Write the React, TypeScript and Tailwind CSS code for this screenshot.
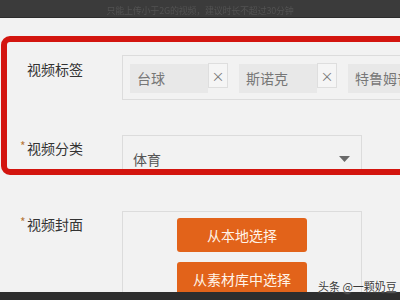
import { ReactNode } from 'react';

const font = { fontFamily: '"Noto Sans CJK SC", "Microsoft YaHei", sans-serif' };

function Label({ children, required }: { children: ReactNode; required?: boolean }) {
  return (
    <div className="flex items-start text-[14px] leading-[20px] text-[#333]">
      <span className="w-[7px] text-[12px] leading-[16px] text-[#b8783a]">{required ? '*' : ''}</span>
      <span>{children}</span>
    </div>
  );
}

function Tag({ text }: { text: string }) {
  return (
    <div className="flex items-start shrink-0">
      <div className="w-[78px] h-[29px] bg-[#e8e8e8] pl-[7px] text-[14px] leading-[29px] text-[#777] whitespace-nowrap overflow-hidden">
        {text}
      </div>
      <div className="w-[20px] h-[25px] -mt-[1px] bg-[#f5f5f5] border border-[#dedede] flex items-center justify-center text-[13px] text-[#777]">
        ×
      </div>
    </div>
  );
}

export default function App() {
  return (
    <div className="relative w-[400px] h-[300px] overflow-hidden bg-[#f2f2f2] flex flex-col" style={font}>
      <div className="h-[18px] shrink-0 bg-[#3b3b3b] border-b border-[#2c2c2c] flex items-center justify-center pt-[4px]">
        <span className="text-[9px] text-[#525252] blur-[0.6px] tracking-tight">
          只能上传小于2G的视频，建议时长不超过30分钟
        </span>
      </div>

      <div className="flex-1 overflow-hidden pt-[18px]">
        <div className="ml-[1px] w-[420px] h-[139px] border-[6px] border-[#d3150f] rounded-[9px] overflow-hidden pt-[13px]">
          <div className="flex">
            <div className="w-[115px] shrink-0 pl-[13px] pt-[4px]">
              <Label>视频标签</Label>
            </div>
            <div className="flex-1 min-w-0 h-[45px] border border-[#dcdcdc] flex items-start gap-[11px] pl-[7px] pt-[8px] overflow-hidden">
              <Tag text="台球" />
              <Tag text="斯诺克" />
              <Tag text="特鲁姆普" />
            </div>
          </div>

          <div className="flex mt-[35px]">
            <div className="w-[115px] shrink-0 pl-[13px] pt-[3px]">
              <Label required>视频分类</Label>
            </div>
            <div className="w-[240px] shrink-0 h-[44px] border border-[#dcdcdc] flex items-start justify-between pl-[10px] pr-[11px] pt-[13px]">
              <span className="text-[14px] leading-[20px] text-[#555]">体育</span>
              <svg width="11" height="6" viewBox="0 0 11 6" className="mt-[7px]">
                <path d="M0 0 L11 0 L5.5 6 Z" fill="#6a6a6a" />
              </svg>
            </div>
          </div>
        </div>

        <div className="flex mt-[36px]">
          <div className="w-[122px] shrink-0 pl-[20px] pt-[3px]">
            <Label required>视频封面</Label>
          </div>
          <div className="w-[240px] shrink-0 h-[100px] border border-[#dcdcdc] pl-[54px] pt-[6px] flex flex-col gap-[10px]">
            <button className="w-[130px] h-[34px] shrink-0 rounded-[3px] bg-[#e2631a] text-[14px] text-[#fff3e8]">
              从本地选择
            </button>
            <button className="w-[130px] h-[34px] shrink-0 rounded-[3px] bg-[#e2631a] text-[14px] text-[#fff3e8]">
              从素材库中选择
            </button>
          </div>
        </div>
      </div>

      <div className="h-[8px] shrink-0 bg-[#2e2e2e]" />

      <div className="absolute left-[318px] top-[280px] whitespace-nowrap text-[11px] leading-[13px] text-[#3a3a3a] [text-shadow:0_0_2px_#fff]">
        头条 @一颗奶豆
      </div>
    </div>
  );
}
